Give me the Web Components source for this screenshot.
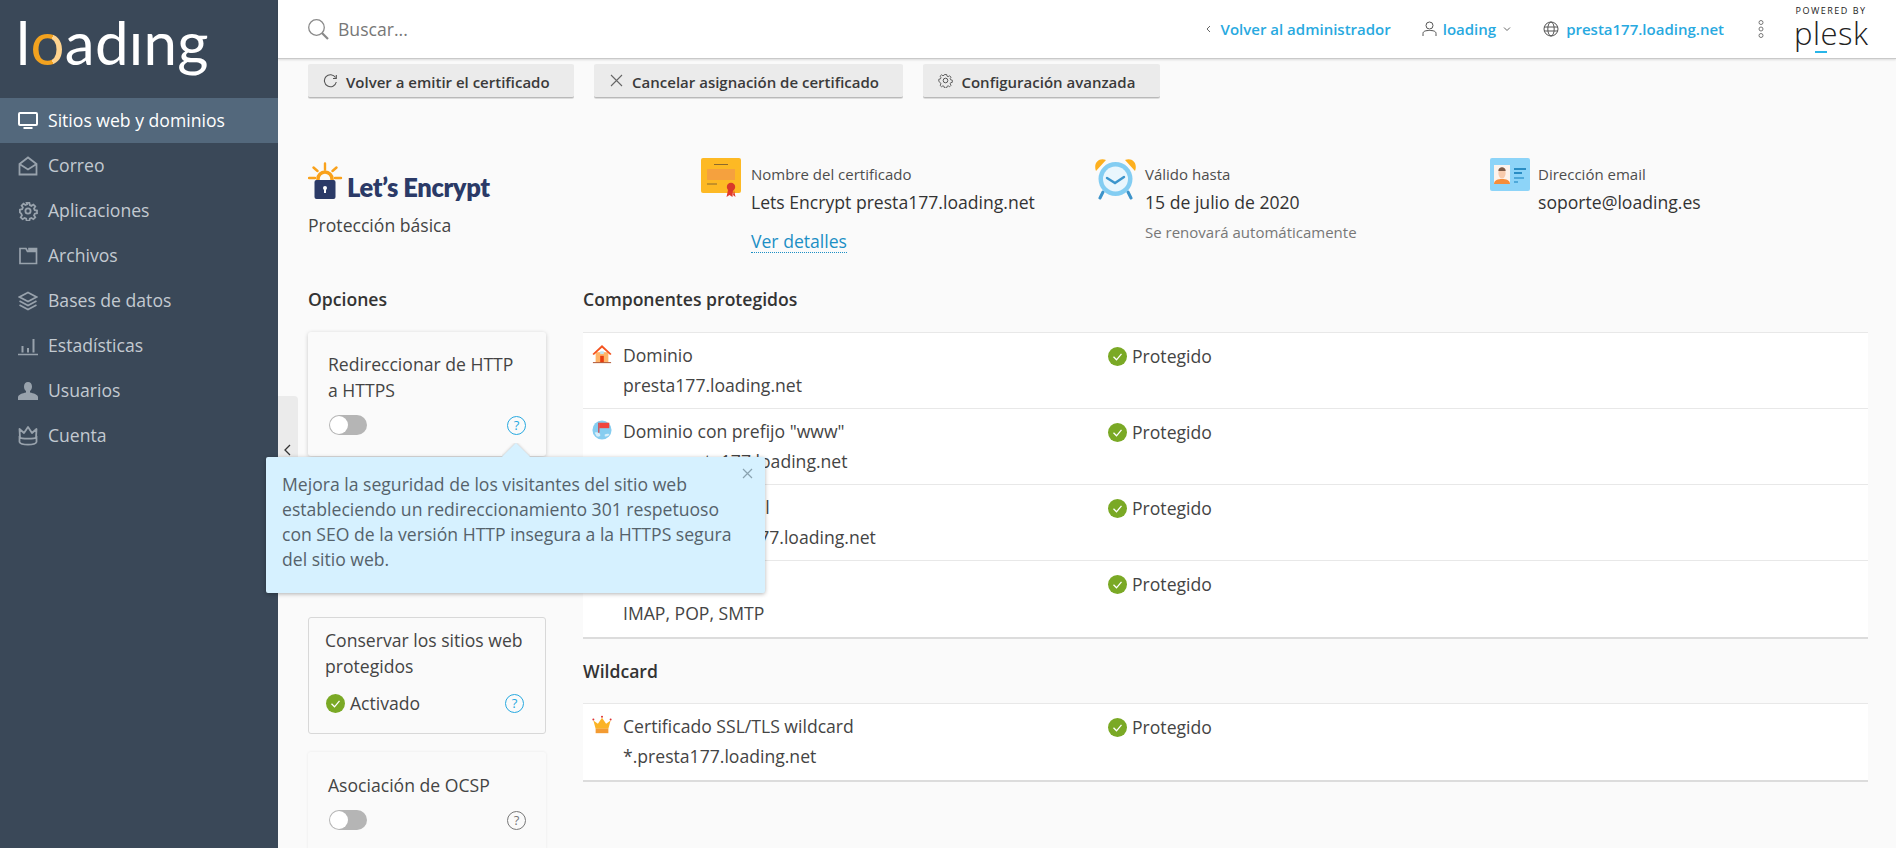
<!DOCTYPE html>
<html lang="es">
<head>
<meta charset="utf-8">
<title>Let's Encrypt</title>
<style>
  html, body { margin: 0; height: 100%; overflow: hidden; }
  body { font-family: "Open Sans", "Liberation Sans", sans-serif; font-size: 17.6px; color: #333; background: #fafafa; }
</style>
</head>
<body>
<app-shell>
  <side-nav slot="side">
    <nav-item icon="monitor" active>Sitios web y dominios</nav-item>
    <nav-item icon="mail">Correo</nav-item>
    <nav-item icon="gear">Aplicaciones</nav-item>
    <nav-item icon="folder">Archivos</nav-item>
    <nav-item icon="layers">Bases de datos</nav-item>
    <nav-item icon="chart">Estadísticas</nav-item>
    <nav-item icon="user">Usuarios</nav-item>
    <nav-item icon="crown">Cuenta</nav-item>
  </side-nav>
  <top-bar slot="top"></top-bar>

  <tool-bar>
    <tool-btn icon="reload">Volver a emitir el certificado</tool-btn>
    <tool-btn icon="close">Cancelar asignación de certificado</tool-btn>
    <tool-btn icon="gear">Configuración avanzada</tool-btn>
  </tool-bar>

  <cert-summary>
    <le-brand>Protección básica</le-brand>
    <info-col icon="cert" label="Nombre del certificado" value="Lets Encrypt presta177.loading.net" link="Ver detalles"></info-col>
    <info-col icon="clock" label="Válido hasta" value="15 de julio de 2020" note="Se renovará automáticamente"></info-col>
    <info-col icon="card" label="Dirección email" value="soporte@loading.es"></info-col>
  </cert-summary>

  <two-cols>
    <section slot="left">
      <sec-title>Opciones</sec-title>
      <opt-card kind="raised" height="124">
        Redireccionar de HTTP a&nbsp;HTTPS
        <toggle-switch slot="control"></toggle-switch>
        <help-mark slot="help" tone="blue"></help-mark>
      </opt-card>
      <opt-card kind="spacer" height="125"></opt-card>
      <opt-card kind="bordered" height="117">
        Conservar los sitios web protegidos
        <status-ok slot="control">Activado</status-ok>
        <help-mark slot="help" tone="blue"></help-mark>
      </opt-card>
      <opt-card kind="raised" height="120">
        Asociación de OCSP
        <toggle-switch slot="control"></toggle-switch>
        <help-mark slot="help" tone="grey"></help-mark>
      </opt-card>
    </section>

    <section slot="right">
      <sec-title>Componentes protegidos</sec-title>
      <comp-table>
        <comp-row icon="house" name="Dominio" host="presta177.loading.net"></comp-row>
        <comp-row icon="globe-flag" name='Dominio con prefijo "www"' host="www.presta177.loading.net"></comp-row>
        <comp-row icon="none" name="Dominio webmail" host="webmail.presta177.loading.net" style="word-spacing:3px"></comp-row>
        <comp-row icon="none" name="Correo" host="IMAP, POP, SMTP"></comp-row>
      </comp-table>
      <sec-title class="second">Wildcard</sec-title>
      <comp-table>
        <comp-row icon="king" name="Certificado SSL/TLS wildcard" host="*.presta177.loading.net"></comp-row>
      </comp-table>
    </section>
  </two-cols>

  <side-handle slot="over"></side-handle>
  <hint-tip slot="over">Mejora la seguridad de los visitantes del sitio web<br>estableciendo un redireccionamiento 301 respetuoso<br>con SEO de la versión HTTP insegura a la HTTPS segura<br>del sitio web.</hint-tip>
</app-shell>

<script>
const NAV_ICONS = {
  monitor: '<rect x="1" y="2" width="18" height="12" rx="1" fill="none" stroke="currentColor" stroke-width="2"/><rect x="5.500" y="16" width="9" height="2" fill="currentColor"/>',
  mail: '<path d="M1.500 8 10 1.500 18.500 8v10.500h-17z M1.500 8 10 13.500 18.500 8" fill="none" stroke="currentColor" stroke-width="1.800"/>',
  gear: '<path d="M8.500 1h3l.5 2.500 1.800.8 2.200-1.400 2.100 2.100-1.400 2.200.8 1.800 2.500.5v3l-2.500.5-.8 1.800 1.400 2.200-2.100 2.100-2.200-1.400-1.800.8-.5 2.500h-3l-.5-2.500-1.800-.8-2.200 1.400-2.100-2.100 1.400-2.200-.8-1.800L1 11.500v-3l2.500-.5.8-1.800-1.400-2.200L5 1.900l2.200 1.400 1.800-.8z" transform="translate(1 1) scale(.9)" fill="none" stroke="currentColor" stroke-width="2"/><circle cx="10" cy="10" r="2.600" fill="none" stroke="currentColor" stroke-width="1.800"/>',
  folder: '<path d="M2 2.500h6l1.500 3H18.500v12H2z M11 2.500h7.500v1.500H11z" fill="none" stroke="currentColor" stroke-width="1.700"/>',
  layers: '<path d="M10 1.500 18.500 6 10 10.500 1.500 6z" fill="none" stroke="currentColor" stroke-width="1.700"/><path d="M1.500 10 10 14.500 18.500 10M1.500 14 10 18.500 18.500 14" fill="none" stroke="currentColor" stroke-width="1.700"/>',
  chart: '<path d="M0 18.500h20" stroke="currentColor" stroke-width="1.500"/><path d="M4.500 10v6.500M10 12v4.500M15.500 3v13.500" stroke="currentColor" stroke-width="2"/>',
  user: '<path d="M10 1c2.500 0 4 1.900 4 4.500 0 2-.8 3.700-2 4.600v1.400c3.500.8 7.500 2 8 4.500v3H0v-3c.5-2.500 4.500-3.700 8-4.500v-1.400c-1.200-.9-2-2.600-2-4.600C6 2.900 7.500 1 10 1z" fill="currentColor"/>',
  crown: '<path d="M2 12 1.500 3 6 7l4-6 4 6 4.500-4L18 12" fill="none" stroke="currentColor" stroke-width="1.800" stroke-linejoin="round"/><path d="M1.500 11.500c2 1.500 15 1.500 17 0v4.500c-1.500 3.500-15.500 3.500-17 0z" fill="none" stroke="currentColor" stroke-width="1.800"/>'
};

class AppShell extends HTMLElement {
  constructor() {
    super();
    this.attachShadow({ mode: 'open' });
    this.shadowRoot.innerHTML = `
      <style>
        :host { display: flex; width: 1896px; height: 848px; position: relative; overflow: hidden; }
        .side { flex: 0 0 278px; }
        .main { flex: 1; min-width: 0; display: flex; flex-direction: column; }
        .page { flex: 1; min-height: 0; overflow: hidden; padding: 5px 28px 0 30px; }
      </style>
      <div class="side"><slot name="side"></slot></div>
      <div class="main">
        <slot name="top"></slot>
        <div class="page"><slot></slot></div>
      </div>
      <slot name="over"></slot>
    `;
  }
}

class SideNav extends HTMLElement {
  constructor() {
    super();
    this.attachShadow({ mode: 'open' });
    this.shadowRoot.innerHTML = `
      <style>
        :host { display: block; height: 848px; background: #3a4858; }
        .logo {
          height: 98px; box-sizing: border-box; padding: 2px 0 0 16px;
          font: 400 60px/80px Lato, "Open Sans", sans-serif; color: #fff; letter-spacing: .3px; white-space: nowrap;
        }
        .logo span {
          background: conic-gradient(from 20deg at 50% 62%, #ffd48f 0 38%, #f2a21f 38% 100%);
          -webkit-background-clip: text; background-clip: text; color: transparent;
        }
      </style>
      <div class="logo">l<span>o</span>adıng</div>
      <slot></slot>
    `;
  }
}

class NavItem extends HTMLElement {
  constructor() {
    super();
    this.attachShadow({ mode: 'open' });
    const active = this.hasAttribute('active');
    this.shadowRoot.innerHTML = `
      <style>
        :host { display: flex; align-items: center; height: 45px; padding-left: 18px; gap: 10px; font-size: 17.6px;
          color: ${active ? '#fff' : '#c3cad1'}; background: ${active ? '#53687c' : 'transparent'}; }
        svg { width: 20px; height: 20px; flex: none; color: ${active ? '#fff' : '#98a2ac'}; }
        span { margin-top: -2px; }
      </style>
      <svg viewBox="0 0 20 20">${NAV_ICONS[this.getAttribute('icon')]}</svg>
      <span><slot></slot></span>
    `;
  }
}

class TopBar extends HTMLElement {
  constructor() {
    super();
    this.attachShadow({ mode: 'open' });
    this.shadowRoot.innerHTML = `
      <style>
        :host { display: flex; align-items: center; height: 59px; flex: none; box-sizing: border-box; padding: 0 28px 0 29px;
          background: #fff; border-bottom: 1px solid #c9c9c9; box-shadow: 0 1px 2px rgba(0,0,0,.12); position: relative; z-index: 2; }
        .search { display: flex; align-items: center; gap: 8px; color: #777; font-size: 17.6px; flex: 1; }
        .search svg { width: 23px; height: 23px; }
        a { color: #28a9e0; font-size: 15px; font-weight: 600; text-decoration: none; white-space: nowrap; }
        .links { display: flex; align-items: center; }
        .grp { display: flex; align-items: center; }
        .pk { position: relative; width: 74px; height: 48px; margin-left: 29px; color: #222; text-align: center; }
        .pk small { display: block; font: 9px/11px "Open Sans", sans-serif; letter-spacing: 1.500px; white-space: nowrap; }
        .pk b { display: block; font: 300 31px/28px "Open Sans", sans-serif; letter-spacing: .5px; margin-top: 3px; }
        .pk i { position: absolute; left: 21px; top: 46px; width: 12px; height: 2px; background: #28b5e8; }
        svg { display: block; flex: none; }
      </style>
      <div class="search">
        <svg viewBox="0 0 23 23" fill="none" stroke="#8a8a8a" stroke-width="1.300"><circle cx="9.500" cy="9.500" r="7.800"/><path d="M15 15l6 6" stroke-width="2.200"/></svg>
        Buscar...
      </div>
      <div class="links">
        <div class="grp">
          <svg width="6" height="10" viewBox="0 0 6 10" fill="none" stroke="#666" style="margin-right:10px"><path d="M5 2 2 5l3 3"/></svg>
          <a>Volver al administrador</a>
        </div>
        <div class="grp" style="margin-left:31px">
          <svg width="15" height="16" viewBox="0 0 15 16" fill="none" stroke="#555"><circle cx="7.500" cy="4.500" r="3.500"/><path d="M1 15v-2.500C1 10 4 9.500 7.500 9.500s6.500.5 6.500 3V15"/></svg>
          <a style="margin-left:6px">loading</a>
          <svg width="8" height="6" viewBox="0 0 8 6" fill="none" stroke="#666" style="margin-left:7px"><path d="M1 1.500 4 4.500l3-3"/></svg>
        </div>
        <div class="grp" style="margin-left:32px">
          <svg width="16" height="16" viewBox="0 0 16 16" fill="none" stroke="#555"><circle cx="8" cy="8" r="7"/><ellipse cx="8" cy="8" rx="3.200" ry="7"/><path d="M1 6h14M1 10h14"/></svg>
          <a style="margin-left:7px">presta177.loading.net</a>
        </div>
        <svg width="8" height="20" viewBox="0 0 8 20" fill="none" stroke="#777" style="margin-left:33px"><circle cx="4" cy="3.500" r="2"/><circle cx="4" cy="10" r="2"/><circle cx="4" cy="16.500" r="2"/></svg>
        <div class="pk"><small>POWERED BY</small><b>plesk</b><i></i></div>
      </div>
    `;
  }
}

class ToolBar extends HTMLElement {
  constructor() {
    super();
    this.attachShadow({ mode: 'open' });
    this.shadowRoot.innerHTML = `
      <style>:host { display: flex; gap: 20px; height: 34px; }</style>
      <slot></slot>
    `;
  }
}

class ToolBtn extends HTMLElement {
  constructor() {
    super();
    this.attachShadow({ mode: 'open' });
    const icons = {
      reload: '<path d="M12.500 4.500A6 6 0 1 0 13.300 9" fill="none" stroke="#555" stroke-width="1.100"/><path d="M13.300 2v3.500H10" fill="none" stroke="#555" stroke-width="1.100"/>',
      close: '<path d="M2 2l11 11M13 2 2 13" stroke="#666" stroke-width="1.100"/>',
      gear: '<path d="M6.300 1h2.400l.4 1.800 1.300.6 1.600-1 1.600 1.600-1 1.600.6 1.300 1.800.4v2.400l-1.800.4-.6 1.300 1 1.600-1.600 1.600-1.600-1-1.300.6-.4 1.800H6.300l-.4-1.800-1.300-.6-1.600 1-1.600-1.600 1-1.600-.6-1.300L0 8.700V6.300l1.800-.4.600-1.300-1-1.600 1.600-1.600 1.600 1 1.300-.6z" transform="translate(.8 .6) scale(.9)" fill="none" stroke="#555"/><circle cx="7.500" cy="7.500" r="2.300" fill="none" stroke="#555"/>'
    };
    this.shadowRoot.innerHTML = `
      <style>
        :host { display: flex; align-items: center; box-sizing: border-box; height: 34px; padding: 2px 24.500px 0 15px; gap: 8px;
          background: #ebebeb; border-bottom: 1px solid #b9b9b9; border-radius: 2px; box-shadow: 0 1px 0 #ddd;
          font-size: 15px; font-weight: 600; color: #3a3a3a; white-space: nowrap; }
        svg { width: 15px; height: 15px; flex: none; margin-top: -2px; }
      </style>
      <svg viewBox="0 0 15 15">${icons[this.getAttribute('icon')]}</svg>
      <slot></slot>
    `;
  }
}

class CertSummary extends HTMLElement {
  constructor() {
    super();
    this.attachShadow({ mode: 'open' });
    this.shadowRoot.innerHTML = `
      <style>:host { display: grid; grid-template-columns: 393px 393px 396px 1fr; height: 130px; padding-top: 60px; box-sizing: content-box; }</style>
      <slot></slot>
    `;
  }
}

class LeBrand extends HTMLElement {
  constructor() {
    super();
    this.attachShadow({ mode: 'open' });
    this.shadowRoot.innerHTML = `
      <style>
        :host { display: block; }
        .mark { display: flex; align-items: flex-end; height: 42px; }
        svg { display: block; flex: none; }
        b { font: 800 25.500px/30px Lato, "Open Sans", sans-serif; color: #2b3a67; letter-spacing: -.4px; margin-left: 3px; position: relative; top: 2px; white-space: nowrap; }
        p { margin: 14px 0 0; font-size: 17.6px; line-height: 22px; color: #444; }
      </style>
      <div class="mark">
        <svg width="36" height="38" viewBox="0 0 36 38">
          <g stroke="#f9a11b" stroke-width="2.400" stroke-linecap="round" fill="none">
            <path d="M17 1.500v6M5.500 5.500l4 3.500M28.500 5.500l-4 3.500M1 16h6M27 16h6"/>
            <path d="M10 20v-3a7 7 0 0 1 14 0v3" stroke-width="3.500" stroke-linecap="butt"/>
          </g>
          <rect x="6.500" y="18" width="21" height="19" rx="2" fill="#2b3a67"/>
          <circle cx="17" cy="26" r="2" fill="#fff"/><rect x="16" y="26" width="2" height="5" fill="#fff"/>
        </svg>
        <b>Let’s Encrypt</b>
      </div>
      <p><slot></slot></p>
    `;
  }
}

const BIG_ICONS = {
  cert: `<svg width="42" height="40" viewBox="0 0 42 40"><rect x="0" y="0" width="40" height="35" rx="2" fill="#fdb924"/><rect x="6" y="11" width="28" height="11" fill="#f5a13e"/><path d="M13 6.500h14M6 26h10" stroke="#8c6a2c" stroke-width="1"/><path d="M27 32l-1.500 7 3-2 3 2 .5-7M33 32l1.500 7-2.500-2" fill="#e13b2b"/><circle cx="30" cy="29" r="4.200" fill="#d8382a"/></svg>`,
  clock: `<svg width="43" height="42" viewBox="0 0 43 42"><path d="M2 13C-1 5 5-1 12 2zM41 13c3-8-3-14-10-11z" fill="#fdb01f"/><path d="M9 34l-3 6M34 34l3 6" stroke="#3c93c9" stroke-width="3" stroke-linecap="round"/><circle cx="21.500" cy="21" r="17" fill="#83cdf2"/><circle cx="21.500" cy="21" r="12.500" fill="#e9f6fd"/><path d="M13 20l8 5 9-6" fill="none" stroke="#3b95cc" stroke-width="2.400" stroke-linecap="round"/></svg>`,
  card: `<svg width="40" height="33" viewBox="0 0 40 33"><rect width="40" height="33" rx="2" fill="#8dd4f8"/><rect x="4" y="7" width="16" height="19" fill="#fdf3ec"/><path d="M4 26c0-4 4-5 8-5s8 1 8 5z" fill="#f58d3a"/><ellipse cx="12" cy="15" rx="3.600" ry="5.500" fill="#f8cbad"/><path d="M8.300 13c0-5 7.400-5 7.400 0z" fill="#7b5a46"/><path d="M24 11h12M24 15h8" stroke="#2a8dc4" stroke-width="2.200"/><path d="M24 20h10M24 24h4" stroke="#3a9bd0" stroke-width="1.300"/></svg>`
};

class InfoCol extends HTMLElement {
  constructor() {
    super();
    this.attachShadow({ mode: 'open' });
    const a = (n) => this.getAttribute(n);
    this.shadowRoot.innerHTML = `
      <style>
        :host { display: flex; gap: 8px; align-items: flex-start; }
        .ic { flex: none; height: 42px; }
        .txt { padding-top: 6px; }
        .lab { font-size: 15px; line-height: 20px; color: #4d4d4d; }
        .val { font-size: 17.6px; line-height: 22px; margin-top: 7px; color: #333; white-space: nowrap; }
        .note { font-size: 15px; line-height: 18px; margin-top: 10px; color: #777; }
        a { display: inline-block; font-size: 17.6px; line-height: 22px; margin-top: 17px; color: #1c8fc5; border-bottom: 1px dotted #1c8fc5; }
      </style>
      <div class="ic">${BIG_ICONS[a('icon')]}</div>
      <div class="txt">
        <div class="lab">${a('label')}</div>
        <div class="val">${a('value')}</div>
        ${a('note') ? `<div class="note">${a('note')}</div>` : ''}
        ${a('link') ? `<a>${a('link')}</a>` : ''}
      </div>
    `;
  }
}

class TwoCols extends HTMLElement {
  constructor() {
    super();
    this.attachShadow({ mode: 'open' });
    this.shadowRoot.innerHTML = `
      <style>
        :host { display: grid; grid-template-columns: 238px 1fr; column-gap: 37px; margin-top: 0; }
      </style>
      <div><slot name="left"></slot></div>
      <div><slot name="right"></slot></div>
    `;
  }
}

class SecTitle extends HTMLElement {
  constructor() {
    super();
    this.attachShadow({ mode: 'open' });
    this.shadowRoot.innerHTML = `
      <style>
        :host { display: block; font-size: 17.6px; font-weight: 600; line-height: 22px; color: #333; padding: 0 0 22px; }
        :host(.second) { padding: 21px 0 21px; }
      </style>
      <slot></slot>
    `;
  }
}

class OptCard extends HTMLElement {
  constructor() {
    super();
    this.attachShadow({ mode: 'open' });
    const kind = this.getAttribute('kind');
    this.shadowRoot.innerHTML = `
      <style>
        :host { display: block; box-sizing: border-box; height: ${this.getAttribute('height')}px; margin-bottom: 18px; border-radius: 3px; color: #444; font-size: 17.6px; line-height: 26px; }
        :host([kind=raised]) { padding: 19px 20px 0; box-shadow: 0 1px 4px rgba(0,0,0,.2); }
        :host([kind=raised]:last-child) { box-shadow: 0 0 3px rgba(0,0,0,.07); padding-top: 20px; }
        :host([kind=bordered]) { padding: 9px 16px 0; border: 1px solid #d8d8d8; }
        :host([kind=spacer]) { margin-bottom: 18px; }
        .foot { display: flex; justify-content: space-between; align-items: center; margin-top: 13px; padding-right: 5px; }
        :host([kind=raised]) .foot { padding-right: 0; margin-top: 12px; }
      </style>
      ${kind === 'spacer' ? '' : `<div><slot></slot></div>
      <div class="foot"><slot name="control"></slot><slot name="help"></slot></div>`}
    `;
  }
}

class ToggleSwitch extends HTMLElement {
  constructor() {
    super();
    this.attachShadow({ mode: 'open' });
    this.shadowRoot.innerHTML = `
      <style>
        :host { display: block; position: relative; width: 38px; height: 20px; border-radius: 10px; background: #b5b5b5; margin-left: 1px; }
        i { position: absolute; left: 1px; top: 1px; width: 18px; height: 18px; border-radius: 50%; background: #fff; }
      </style>
      <i></i>
    `;
  }
}

class HelpMark extends HTMLElement {
  constructor() {
    super();
    this.attachShadow({ mode: 'open' });
    const c = this.getAttribute('tone') === 'blue' ? '#28a9e0' : '#777';
    this.shadowRoot.innerHTML = `
      <style>
        :host { display: block; box-sizing: border-box; width: 19px; height: 19px; border: 1.300px solid ${c}; border-radius: 50%;
          color: ${c}; font-size: 13px; line-height: 17px; text-align: center; }
      </style>
      ?
    `;
  }
}

const CHECK = `<svg width="19" height="19" viewBox="0 0 19 19" style="display:block;flex:none"><circle cx="9.500" cy="9.500" r="9.500" fill="#7aa925"/><path d="M5.500 9.800l3 3 5-6" fill="none" stroke="#fff" stroke-width="1.300"/></svg>`;

class StatusOk extends HTMLElement {
  constructor() {
    super();
    this.attachShadow({ mode: 'open' });
    this.shadowRoot.innerHTML = `
      <style>
        :host { display: flex; align-items: center; gap: 5px; font-size: 17.6px; line-height: 22px; color: #444; margin-left: 1px; }
      </style>
      ${CHECK}<slot></slot>
    `;
  }
}

class CompTable extends HTMLElement {
  constructor() {
    super();
    this.attachShadow({ mode: 'open' });
    this.shadowRoot.innerHTML = `
      <style>
        :host { display: block; background: #fff; border-top: 1px solid #e8e8e8; border-bottom: 2px solid #dcdcdc; }
      </style>
      <slot></slot>
    `;
  }
}

const ROW_ICONS = {
  none: '',
  house: '<svg width="20" height="20" viewBox="0 0 22 22"><rect x="4" y="9" width="14" height="11" fill="#ffb469"/><path d="M11 1 0.500 11l1.500 1L11 4l9 8 1.500-1z" fill="#f4531f"/><rect x="9" y="13" width="4" height="7" fill="#e83c10"/><rect x="9" y="8" width="4" height="3" fill="#bfe3f2"/><path d="M1 20.500h20" stroke="#a6421a"/></svg>',
  'globe-flag': '<svg width="20" height="20" viewBox="0 0 22 22"><circle cx="11" cy="11" r="10.500" fill="#86cdf0"/><path d="M3 14c3-1 5 0 6 2s-2 3-4 2zM14 16c2-1 5-1 5 0s-3 3-5 2z" fill="#d6eefa"/><path d="M7.500 3v11" stroke="#d33" stroke-width="1.200"/><path d="M8 3h11v6l-11 0z" fill="#f0453e"/></svg>',
  king: '<svg width="20" height="20" viewBox="0 0 22 22"><path d="M4 15 1.500 6l5 3.500L11 3l4.500 6.500 5-3.500L18 15z" fill="#fbb326"/><rect x="4" y="15" width="14" height="5" fill="#f39b32"/><circle cx="1.500" cy="5" r="1.100" fill="#d33"/><circle cx="11" cy="2" r="1.100" fill="#d33"/><circle cx="20.500" cy="5" r="1.100" fill="#d33"/></svg>'
};

class CompRow extends HTMLElement {
  constructor() {
    super();
    this.attachShadow({ mode: 'open' });
    const a = (n) => this.getAttribute(n);
    this.shadowRoot.innerHTML = `
      <style>
        :host { display: grid; grid-template-columns: 40px 485px 1fr; height: 76px; box-sizing: border-box; padding-top: 11px; border-bottom: 1px solid #e8e8e8; font-size: 17.6px; line-height: 22px; color: #444; }
        :host(:last-child) { border-bottom: 0; height: 76px; }
        .ic { padding-left: 9px; height: 20px; }
        .ic svg { display: block; }
        .host { margin-top: 8px; }
        .st { display: flex; align-items: flex-start; gap: 5px; margin-top: 1px; }
        .st svg { margin-top: 2px; }
      </style>
      <div class="ic">${ROW_ICONS[a('icon')]}</div>
      <div>
        <div>${a('name').replace(/"/g, '&quot;')}</div>
        <div class="host">${a('host')}</div>
      </div>
      <div class="st">${CHECK}<span>Protegido</span></div>
    `;
  }
}

class SideHandle extends HTMLElement {
  constructor() {
    super();
    this.attachShadow({ mode: 'open' });
    this.shadowRoot.innerHTML = `
      <style>
        :host { position: absolute; left: 278px; top: 396px; width: 20px; height: 80px; box-sizing: border-box; padding: 47px 0 0 5px; background: #ebebeb; border-radius: 0 4px 4px 0; }
        svg { display: block; }
      </style>
      <svg width="9" height="14" viewBox="0 0 9 14" fill="none" stroke="#333" stroke-width="1.300"><path d="M7 2 2 7l5 5"/></svg>
    `;
  }
}

class HintTip extends HTMLElement {
  constructor() {
    super();
    this.attachShadow({ mode: 'open' });
    this.shadowRoot.innerHTML = `
      <style>
        :host { position: absolute; left: 266px; top: 457px; width: 499px; height: 136px; box-sizing: border-box; padding: 15px 8px 0 16px; white-space: nowrap;
          background: #d6f1ff; box-shadow: 0 1px 4px rgba(0,0,0,.3); border-radius: 2px; color: #55626b; font-size: 17.6px; line-height: 25px; z-index: 5; }
        .arrow { position: absolute; left: 236px; top: -14px; width: 28px; height: 14px; overflow: hidden; }
        .arrow::before { content: ""; position: absolute; left: 4px; top: 4px; width: 20px; height: 20px; background: #d6f1ff; transform: rotate(45deg); box-shadow: 0 0 3px rgba(0,0,0,.25); }
        svg { position: absolute; right: 12px; top: 11px; }
      </style>
      <div class="arrow"></div>
      <svg width="11" height="11" viewBox="0 0 11 11" stroke="#8aa3b0" stroke-width="1.200"><path d="M1 1l9 9M10 1l-9 9"/></svg>
      <slot></slot>
    `;
  }
}

customElements.define('app-shell', AppShell);
customElements.define('side-nav', SideNav);
customElements.define('nav-item', NavItem);
customElements.define('top-bar', TopBar);
customElements.define('tool-bar', ToolBar);
customElements.define('tool-btn', ToolBtn);
customElements.define('cert-summary', CertSummary);
customElements.define('le-brand', LeBrand);
customElements.define('info-col', InfoCol);
customElements.define('two-cols', TwoCols);
customElements.define('sec-title', SecTitle);
customElements.define('opt-card', OptCard);
customElements.define('toggle-switch', ToggleSwitch);
customElements.define('help-mark', HelpMark);
customElements.define('status-ok', StatusOk);
customElements.define('comp-table', CompTable);
customElements.define('comp-row', CompRow);
customElements.define('side-handle', SideHandle);
customElements.define('hint-tip', HintTip);
</script>
</body>
</html>
